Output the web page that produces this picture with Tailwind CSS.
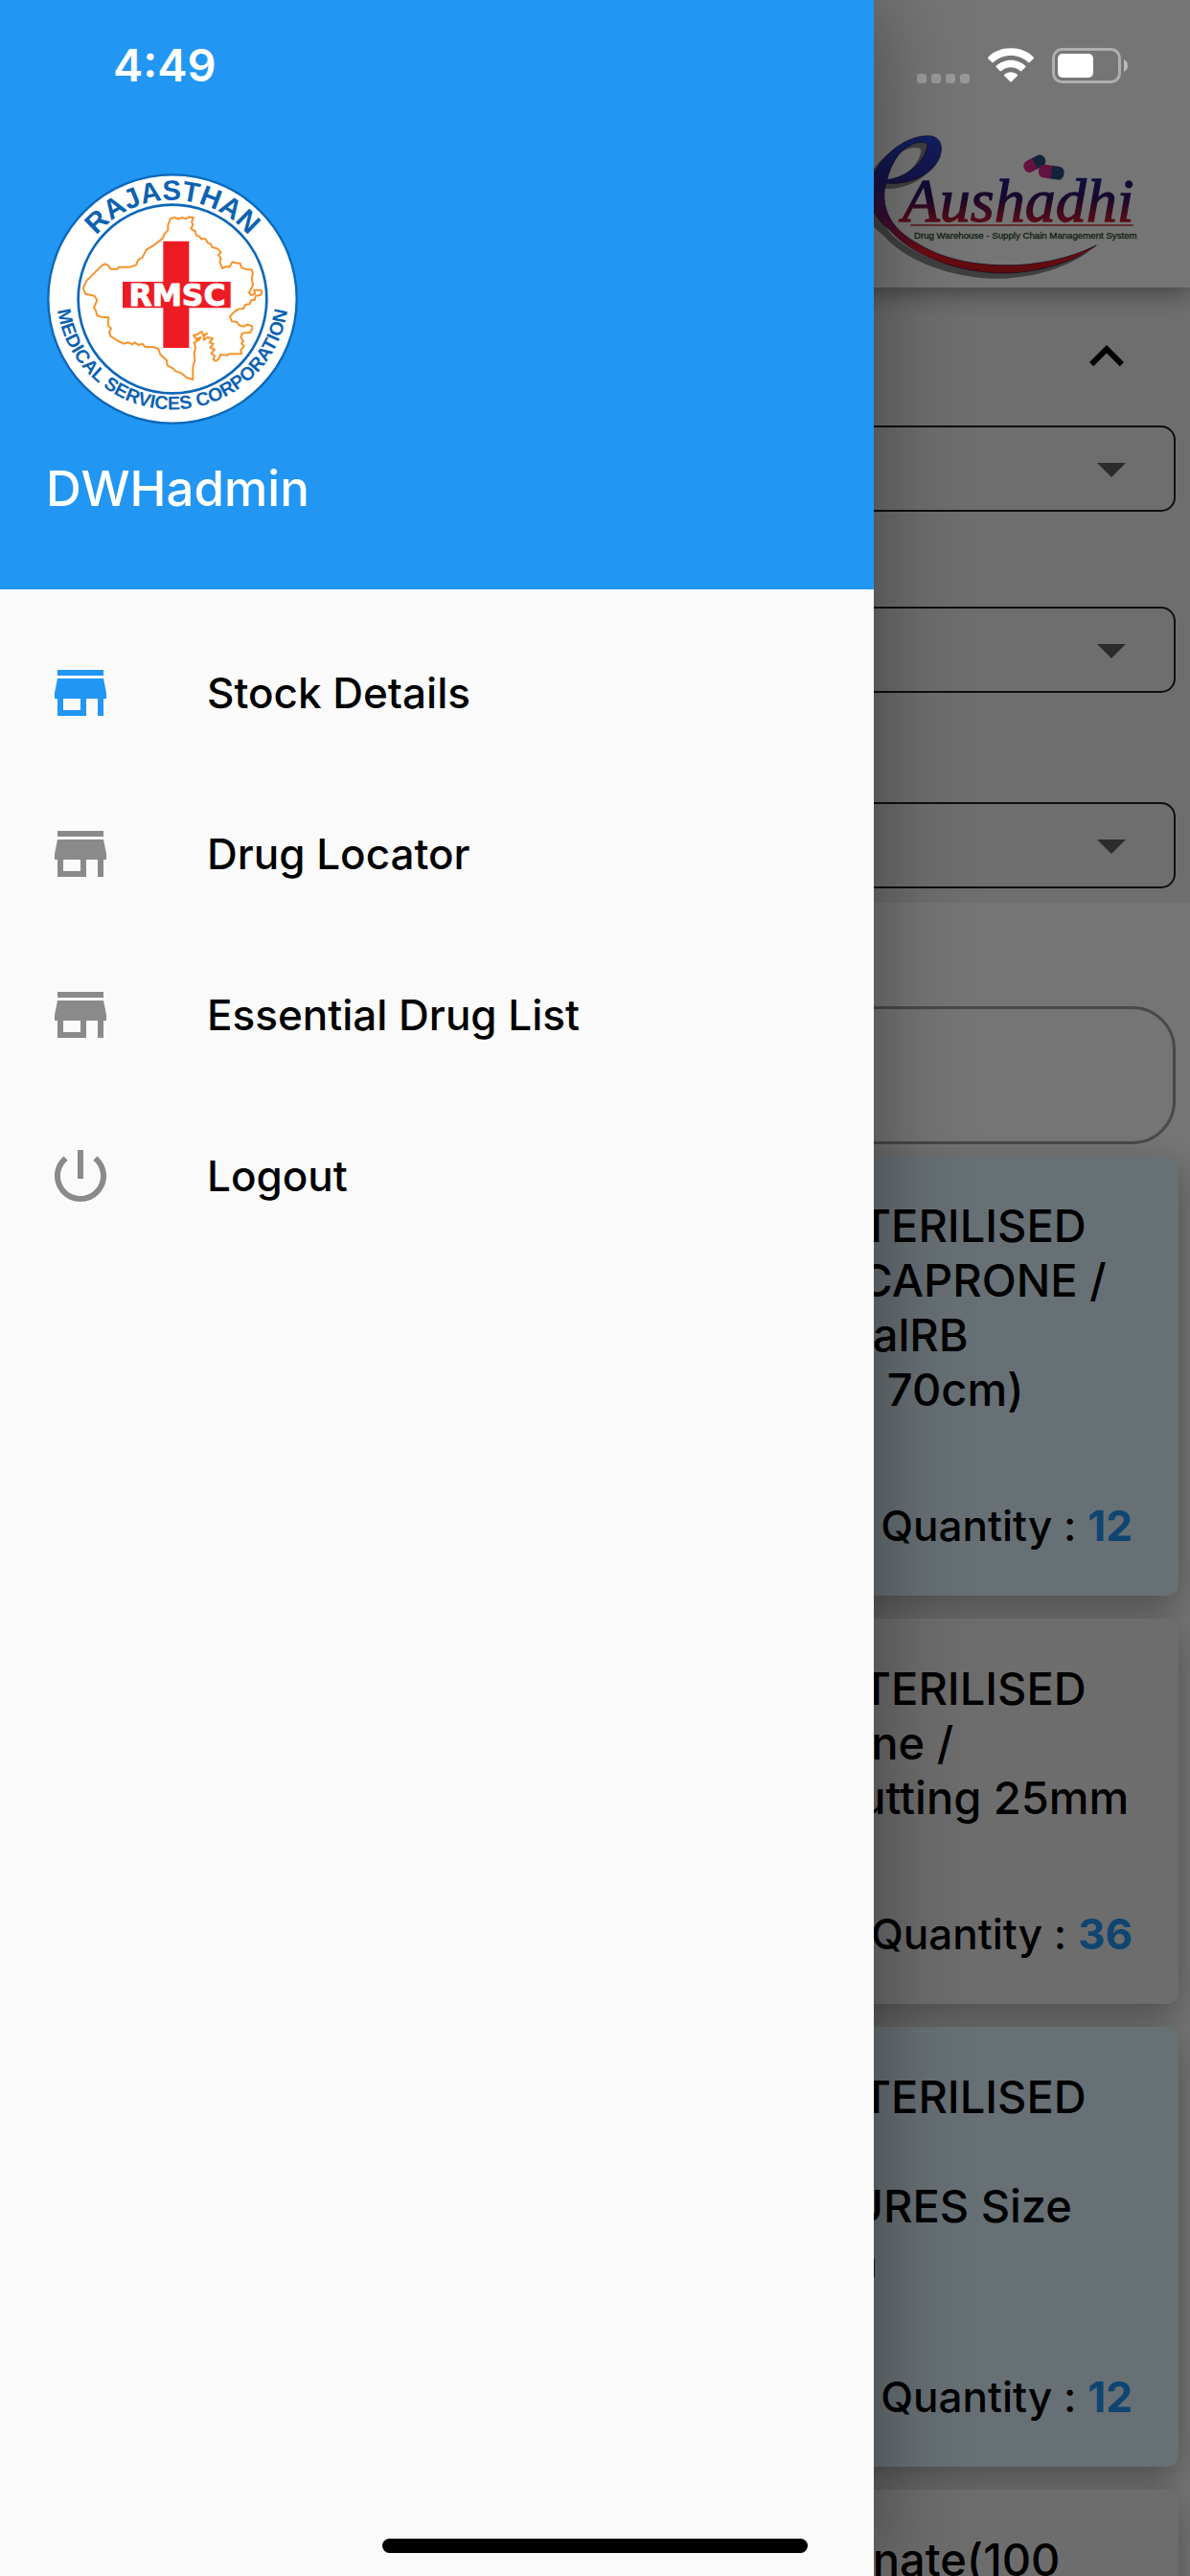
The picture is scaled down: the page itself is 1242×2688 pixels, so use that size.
<!DOCTYPE html>
<html lang="en">
<head>
  <meta charset="UTF-8">
  <meta name="viewport" content="width=device-width, initial-scale=1.0">
  <title>eAushadhi</title>
  <script src="https://cdn.jsdelivr.net/npm/@tailwindcss/browser@4"></script>
</head>
<body class="relative h-screen overflow-hidden bg-white font-['Inter',sans-serif] font-medium text-black">

  <!-- Stock page -->
  <div class="flex h-full flex-col overflow-hidden">
    <header class="relative z-10 flex h-[300px] shrink-0 items-end justify-end bg-white pr-[52px] pb-[10px] shadow-[0_6px_24px_rgba(0,0,0,0.4)]">
      <svg class="h-[160px] w-[310px] overflow-visible" viewBox="0 390 930 480" role="img" aria-label="eAushadhi">
        <defs>
          <linearGradient id="swirl" x1="0" y1="0" x2="0" y2="1">
            <stop offset="0" stop-color="#2548d8"/>
            <stop offset="0.3" stop-color="#2c2ca0"/>
            <stop offset="0.6" stop-color="#7a1c6c"/>
            <stop offset="0.85" stop-color="#f01c22"/>
            <stop offset="1" stop-color="#c81c22"/>
          </linearGradient>
          <linearGradient id="word" gradientUnits="userSpaceOnUse" x1="0" y1="545" x2="0" y2="700">
            <stop offset="0" stop-color="#1c2490"/>
            <stop offset="0.5" stop-color="#38125c"/>
            <stop offset="1" stop-color="#d01c30"/>
          </linearGradient>
          <linearGradient id="pill" x1="0" y1="0" x2="1" y2="0">
            <stop offset="0.48" stop-color="#d8288c"/>
            <stop offset="0.52" stop-color="#28507c"/>
          </linearGradient>
        </defs>
        <path fill="#8c8c8c" transform="translate(76 407)" fill-rule="evenodd" d="M170 35C215 35 220 80 200 115C175 158 120 188 38 184C26 225 34 270 58 305C85 345 130 370 180 395C300 452 520 465 697 378C600 450 450 475 350 462C230 450 110 400 50 330C0 290 -28 240 -10 180C10 110 90 35 170 35ZM42 172C100 168 165 112 168 62C150 45 105 60 75 98C58 122 47 148 42 172Z"/>
        <path fill="url(#swirl)" stroke="#1a1440" stroke-width="2" transform="translate(96 390)" fill-rule="evenodd" d="M170 35C215 35 220 80 200 115C175 158 120 188 38 184C26 225 34 270 58 305C85 345 130 370 180 395C300 452 520 465 697 378C600 450 450 475 350 462C230 450 110 400 50 330C0 290 -28 240 -10 180C10 110 90 35 170 35ZM42 172C100 168 165 112 168 62C150 45 105 60 75 98C58 122 47 148 42 172Z"/>
        <rect x="564" y="493" width="72" height="38" rx="17" fill="url(#pill)" transform="rotate(-28 600 513)"/>
        <rect x="612" y="518" width="80" height="42" rx="18" fill="url(#pill)" transform="rotate(8 652 538)"/>
        <text x="185" y="692" font-family="Liberation Serif, serif" font-style="italic" font-weight="400" font-size="192" fill="url(#word)" stroke="url(#word)" stroke-width="4">Aushadhi</text>
        <path d="M210 705H908" stroke="#c03038" stroke-width="5"/>
        <text x="222" y="748" font-family="Liberation Sans, sans-serif" font-weight="400" font-size="29" fill="#30502c" stroke="#30502c" stroke-width="1">Drug Warehouse - Supply Chain Management System</text>
      </svg>
    </header>

    <section class="shrink-0 bg-[#f0f0f0] px-[15px] pb-[15px]">
      <div class="flex h-[144px] items-center justify-between pr-9 pl-4 text-[44px]">
        <h2>Filters</h2>
        <button type="button" aria-label="Collapse filters">
          <svg class="size-[72px]" viewBox="0 0 24 24"><path d="M12 8l-6 6 1.41 1.41L12 10.83l4.59 4.58L18 14z"/></svg>
        </button>
      </div>
      <div class="relative">
        <select aria-label="Warehouse" class="block h-[90px] w-full appearance-none rounded-[15px] border-2 border-[#222] px-6 text-[44px]"><option>Select</option></select>
        <svg class="pointer-events-none absolute top-[9px] right-[31px] size-[72px] fill-[#616161]" viewBox="0 0 24 24"><path d="M7 10l5 5 5-5z"/></svg>
      </div>
      <div class="relative mt-[99px]">
        <select aria-label="Drug group" class="block h-[90px] w-full appearance-none rounded-[15px] border-2 border-[#222] px-6 text-[44px]"><option>Select</option></select>
        <svg class="pointer-events-none absolute top-[9px] right-[31px] size-[72px] fill-[#616161]" viewBox="0 0 24 24"><path d="M7 10l5 5 5-5z"/></svg>
      </div>
      <div class="relative mt-[114px]">
        <select aria-label="Drug" class="block h-[90px] w-full appearance-none rounded-[15px] border-2 border-[#222] px-6 text-[44px]"><option>Select</option></select>
        <svg class="pointer-events-none absolute top-[9px] right-[31px] size-[72px] fill-[#616161]" viewBox="0 0 24 24"><path d="M7 10l5 5 5-5z"/></svg>
      </div>
    </section>

    <div class="shrink-0 px-[15px] pt-[108px] pb-3">
      <input type="search" aria-label="Search" class="block h-[144px] w-full rounded-[45px] border-[3px] border-[#a0a0a0] px-9 text-[44px]">
    </div>

    <!-- Stock cards -->
    <main class="flex flex-col gap-6 px-3">
      <article class="shrink-0 rounded-xl bg-[#e1f5fe] pt-11 pr-12 pb-9 shadow-[0_12px_36px_rgba(0,0,0,0.35)]">
        <h3 class="pl-[857px] text-[47px] leading-[57px] whitespace-nowrap">STERILISED<br>ECAPRONE /<br>malRB<br>th 70cm)</h3>
        <p class="mt-[78px] flex items-baseline justify-end gap-3 text-[44px] leading-[73px]"><span>Quantity :</span><b class="font-bold text-[#2196f3]">12</b></p>
      </article>
      <article class="shrink-0 rounded-xl bg-[#eee] pt-11 pr-12 pb-9 shadow-[0_12px_36px_rgba(0,0,0,0.35)]">
        <h3 class="pl-[857px] text-[47px] leading-[57px] whitespace-nowrap">STERILISED<br>lone /<br>cutting 25mm</h3>
        <p class="mt-[78px] flex items-baseline justify-end gap-3 text-[44px] leading-[73px]"><span>Quantity :</span><b class="font-bold text-[#2196f3]">36</b></p>
      </article>
      <article class="shrink-0 rounded-xl bg-[#e1f5fe] pt-11 pr-12 pb-9 shadow-[0_12px_36px_rgba(0,0,0,0.35)]">
        <h3 class="pl-[857px] text-[47px] leading-[57px] whitespace-nowrap">STERILISED<br><br>rURES Size<br>rn</h3>
        <p class="mt-[78px] flex items-baseline justify-end gap-3 text-[44px] leading-[73px]"><span>Quantity :</span><b class="font-bold text-[#2196f3]">12</b></p>
      </article>
      <article class="shrink-0 rounded-xl bg-[#eee] pt-11 pr-12 pb-9 shadow-[0_12px_36px_rgba(0,0,0,0.35)]">
        <h3 class="pl-[857px] text-[47px] leading-[57px] whitespace-nowrap">mnate(100</h3>
      </article>
    </main>
  </div>

  <!-- Scrim -->
  <div class="absolute inset-0 z-20 bg-black/54"></div>

  <!-- Drawer -->
  <aside class="absolute inset-y-0 left-0 z-30 w-[912px] bg-[#fafafa] shadow-[0_0_90px_rgba(0,0,0,0.4)]">
    <div class="h-[615px] bg-[#2196f3] px-12 pt-[180px] text-white">
      <svg class="h-[264px] w-[264px]" viewBox="56 60 792 792" role="img" aria-label="Rajasthan Medical Services Corporation">
        <defs>
          <path id="arcTop" d="M142 456A310 310 0 0 1 762 456"/>
          <path id="arcBottom" d="M90 400A364 364 0 1 0 814 400"/>
        </defs>
        <circle cx="452" cy="456" r="389" fill="#fff" stroke="#0d68b8" stroke-width="7"/>
        <circle cx="452" cy="456" r="295" fill="#fff" stroke="#0d68b8" stroke-width="8"/>
        <g font-family="Liberation Sans, sans-serif" font-weight="700" fill="#0d62b0" text-anchor="middle">
          <text font-size="88"><textPath href="#arcTop" startOffset="50%">RAJASTHAN</textPath></text>
          <text font-size="59"><textPath href="#arcBottom" startOffset="50%">MEDICAL SERVICES CORPORATION</textPath></text>
        </g>
        <path transform="translate(150 168)" fill="none" stroke="#f7922c" stroke-width="6" stroke-linejoin="round" d="M296 36L310 33L320 38L332 33L344 37L354 31L368 34L362 46L366 56L360 68L374 76L376 88L386 92L392 100L406 100L412 112L422 116L426 126L442 130L454 142L446 150L454 162L450 172L458 192L470 186L480 188L490 172L504 176L514 176L518 190L536 196L550 196L554 208L550 224L554 244L542 268L548 276L560 272L558 260L580 260L582 270L576 276L562 278L560 290L548 292L544 304L530 306L524 318L508 320L496 328L482 342L488 358L504 360L510 370L526 374L536 368L550 372L552 382L544 394L528 394L520 396L516 408L524 420L518 428L526 436L516 448L518 460L478 460L476 464L452 462L448 474L438 482L430 478L434 466L424 458L434 446L420 440L430 428L418 424L428 412L412 408L400 416L402 402L410 396L398 402L394 390L382 398L368 402L376 414L390 408L386 416L370 424L374 440L370 458L372 480L366 500L366 540L346 534L330 520L312 514L304 506L286 496L284 480L264 462L258 444L240 438L216 438L208 428L196 432L184 424L176 430L164 424L150 428L132 420L108 404L104 392L110 380L100 370L102 346L80 344L66 340L62 324L56 316L66 292L58 278L30 272L22 254L34 230L80 184L90 178L100 182L108 194L130 194L134 188L170 188L188 182L194 166L208 158L214 146L220 134L246 118L272 98L276 86L288 72L288 56Z"/>
        <path fill="#ed1c24" d="M423 275h81v127h130v82H504v125h-81V484H296v-82h127z"/>
        <text x="467" y="477" text-anchor="middle" font-family="DejaVu Sans, sans-serif" font-weight="700" font-size="94" fill="#fff" stroke="#fff" stroke-width="3">RMSC</text>
      </svg>
      <p class="mt-8 text-[51px] leading-[68px]">DWHadmin</p>
    </div>
    <nav class="pt-6">
      <a href="#" class="flex h-[168px] items-center gap-24 px-12 text-[44px]">
        <svg class="size-[72px] fill-[#2196f3]" viewBox="0 0 24 24"><path d="M20 4H4v2h16V4zm1 10v-2l-1-5H4l-1 5v2h1v6h10v-6h4v6h2v-6h1zm-9 4H6v-4h6v4z"/></svg>
        Stock Details
      </a>
      <a href="#" class="flex h-[168px] items-center gap-24 px-12 text-[44px]">
        <svg class="size-[72px] fill-[#8a8a8a]" viewBox="0 0 24 24"><path d="M20 4H4v2h16V4zm1 10v-2l-1-5H4l-1 5v2h1v6h10v-6h4v6h2v-6h1zm-9 4H6v-4h6v4z"/></svg>
        Drug Locator
      </a>
      <a href="#" class="flex h-[168px] items-center gap-24 px-12 text-[44px]">
        <svg class="size-[72px] fill-[#8a8a8a]" viewBox="0 0 24 24"><path d="M20 4H4v2h16V4zm1 10v-2l-1-5H4l-1 5v2h1v6h10v-6h4v6h2v-6h1zm-9 4H6v-4h6v4z"/></svg>
        Essential Drug List
      </a>
      <a href="#" class="flex h-[168px] items-center gap-24 px-12 text-[44px]">
        <svg class="size-[72px] fill-[#8a8a8a]" viewBox="0 0 24 24"><path d="M13 3h-2v10h2V3zm4.83 2.17l-1.42 1.42C17.99 7.86 19 9.81 19 12c0 3.87-3.13 7-7 7s-7-3.13-7-7c0-2.19 1.01-4.14 2.58-5.42L6.17 5.17C4.23 6.82 3 9.26 3 12c0 4.97 4.03 9 9 9s9-4.03 9-9c0-2.74-1.23-5.18-3.17-6.83z"/></svg>
        Logout
      </a>
    </nav>
  </aside>

  <!-- Status bar -->
  <div class="absolute inset-x-0 top-0 z-40 flex h-[136px] items-center justify-between pr-[65px] pl-[118px] text-white">
    <time class="text-[47px] font-semibold">4:49</time>
    <div class="flex items-end gap-[19px]">
      <svg class="h-[10px] w-[55px] fill-white/25" viewBox="0 0 55 10"><rect width="10" height="10" rx="3"/><rect x="15" width="10" height="10" rx="3"/><rect x="30" width="10" height="10" rx="3"/><rect x="45" width="10" height="10" rx="3"/></svg>
      <svg class="h-[37px] w-[48px] fill-white" viewBox="0 0 144 111">
        <path d="M72 1C44 1 18 11 1 29Q-1 32 1 34L13 45Q15 47 18 45C33 31 51 24 72 24S111 31 126 45Q129 47 131 45L143 34Q145 32 143 29C126 11 100 1 72 1Z"/>
        <path d="M72 38C54 38 38 45 26 56Q24 58 26 60L38 72Q40 74 43 72C51 65 61 61 72 61S93 65 101 72Q104 74 106 72L118 60Q120 58 118 56C106 45 90 38 72 38Z"/>
        <path d="M72 76C64 76 57 79 52 83Q50 85 52 88L70 106Q72 108 74 106L92 88Q94 85 92 83C87 79 80 76 72 76Z"/>
      </svg>
      <svg class="h-[37px] w-[79px]" viewBox="0 0 79 37">
        <rect x="1.5" y="1.5" width="69" height="34" rx="9" fill="none" stroke="#fff" stroke-opacity="0.42" stroke-width="3"/>
        <rect x="6" y="6" width="37" height="25" rx="5" fill="#fff"/>
        <path d="M75 12Q79 14 79 18.500T75 25Z" fill="#fff" fill-opacity="0.5"/>
      </svg>
    </div>
  </div>

  <!-- Home indicator -->
  <div class="absolute bottom-6 left-1/2 z-40 h-[15px] w-[444px] -translate-x-1/2 rounded-full bg-black"></div>
</body>
</html>
